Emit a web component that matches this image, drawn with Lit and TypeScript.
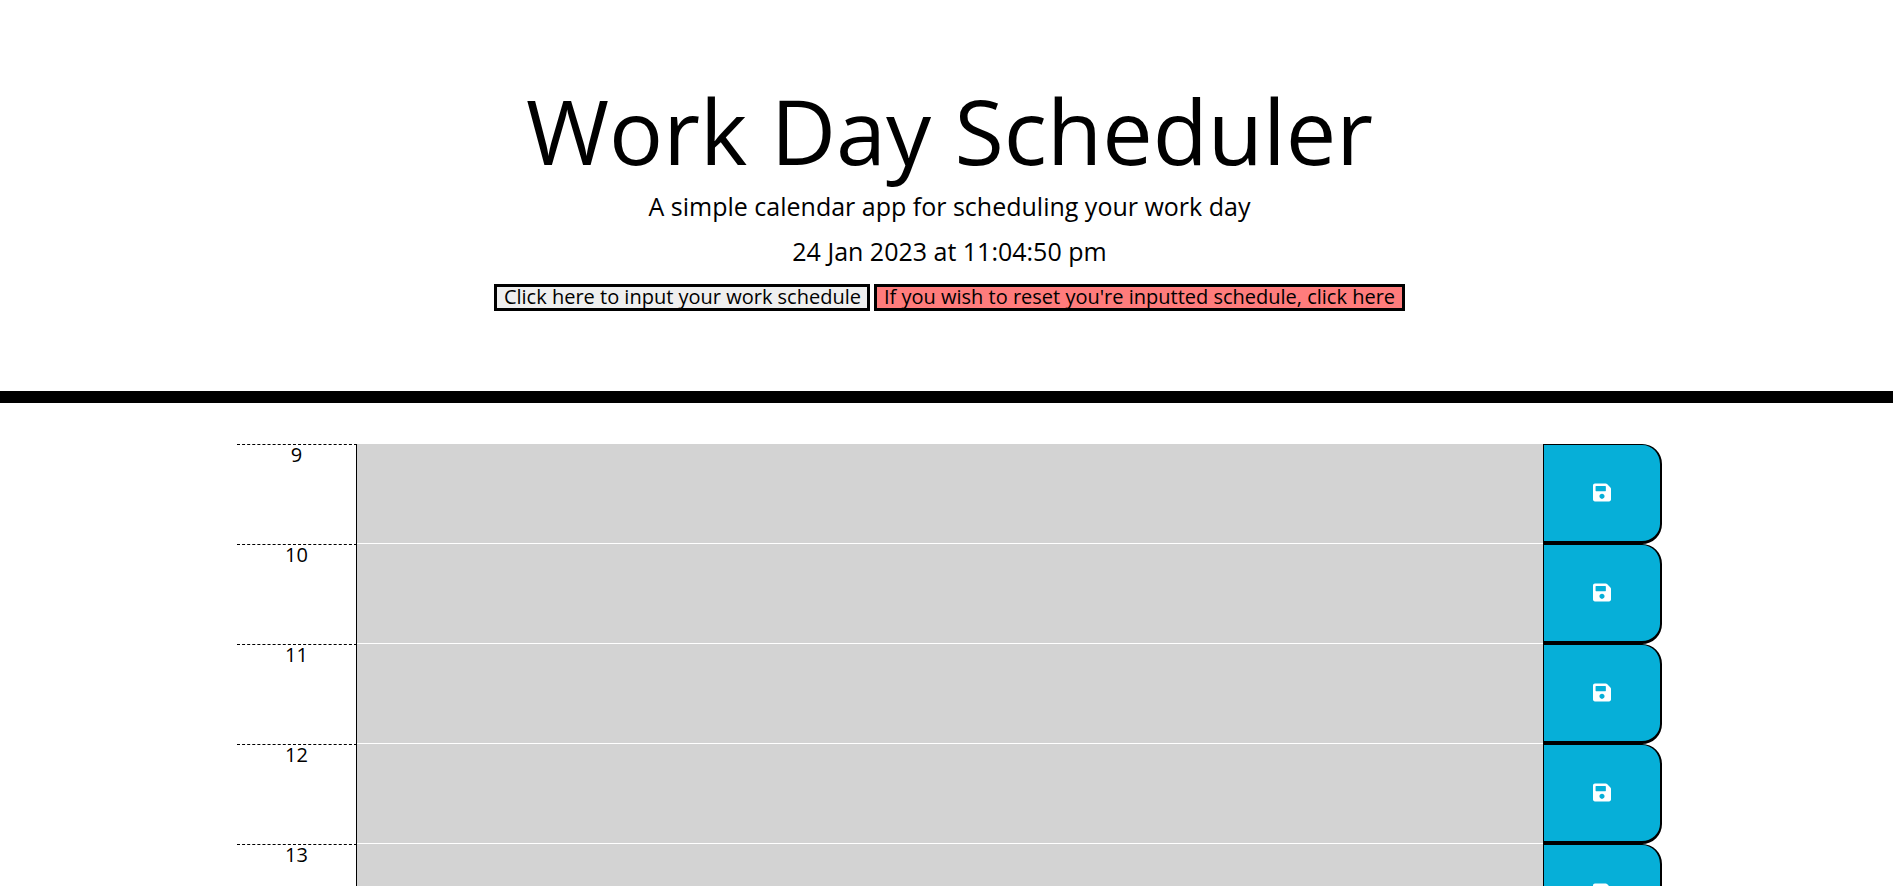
import { LitElement, html, css, svg } from "lit";
import { customElement } from "lit/decorators.js";

const hours = [9, 10, 11, 12, 13];

@customElement("app-root")
export class AppRoot extends LitElement {
  static styles = css`
    :host {
      display: block;
      height: 886px;
      overflow: hidden;
      background: #fff;
      color: #000;
      font-family: "Open Sans", sans-serif;
    }
    .hero {
      height: 403px;
      box-sizing: border-box;
      padding: 72px 0 0 6px;
      border-bottom: 12px solid #000;
      text-align: center;
      margin-bottom: 41px;
    }
    h1 {
      margin: 0;
      font-size: 90px;
      font-weight: 400;
      line-height: 116px;
    }
    p {
      margin: 0;
      font-size: 25px;
      line-height: 36px;
      margin-bottom: 9px;
    }
    p.date {
      margin-bottom: 15px;
    }
    .actions {
      display: flex;
      justify-content: center;
      gap: 4px;
    }
    button {
      font: inherit;
      font-size: 20px;
      line-height: 20px;
      color: #000;
      padding: 0 6.5px 1px;
      border: 3px solid #000;
      border-radius: 0;
      background: #efefef;
    }
    button.reset {
      background: #ff7c7c;
    }
    .rows {
      margin: 0 231px 0 237px;
    }
    .row {
      display: flex;
      height: 100px;
    }
    .hour {
      width: 120px;
      box-sizing: border-box;
      border-top: 1px dashed #000;
      border-right: 1px solid #000;
      text-align: center;
      font-size: 20px;
      line-height: 20px;
    }
    .text {
      flex: 1;
      background: #d3d3d3;
      border-bottom: 1px solid #fff;
    }
    .save {
      width: 119px;
      box-sizing: border-box;
      padding: 0 0 2px;
      background: #06afd8;
      border: 1px solid #000;
      border-width: 1px 2px 3px 1px;
      border-radius: 0 20px 20px 0;
      display: flex;
      align-items: center;
      justify-content: center;
    }
    svg {
      width: 18px;
      height: 21px;
      fill: #fff;
    }
  `;

  render() {
    return html`
      <header class="hero">
        <h1>Work Day Scheduler</h1>
        <p>A simple calendar app for scheduling your work day</p>
        <p class="date">24 Jan 2023 at 11:04:50 pm</p>
        <div class="actions">
          <button>Click here to input your work schedule</button>
          <button class="reset">If you wish to reset you're inputted schedule, click here</button>
        </div>
      </header>
      <main class="rows">
        ${hours.map(
          (h) => html`
            <div class="row">
              <div class="hour">${h}</div>
              <div class="text"></div>
              <button class="save" aria-label="Save">
                <svg viewBox="0 0 448 512">
                  ${svg`<path d="M433.9 129.9l-83.9-83.9A48 48 0 0 0 316.1 32H48C21.5 32 0 53.5 0 80v352c0 26.5 21.5 48 48 48h352c26.5 0 48-21.5 48-48V163.9a48 48 0 0 0-14.1-34zM224 416c-35.3 0-64-28.7-64-64 0-35.3 28.7-64 64-64s64 28.7 64 64c0 35.3-28.7 64-64 64zm96-304.5V212c0 6.6-5.4 12-12 12H76c-6.6 0-12-5.4-12-12V108c0-6.6 5.4-12 12-12h228.5c3.2 0 6.2 1.3 8.5 3.5l3.5 3.5c2.2 2.2 3.5 5.3 3.5 8.5z"/>`}
                </svg>
              </button>
            </div>
          `
        )}
      </main>
    `;
  }
}
